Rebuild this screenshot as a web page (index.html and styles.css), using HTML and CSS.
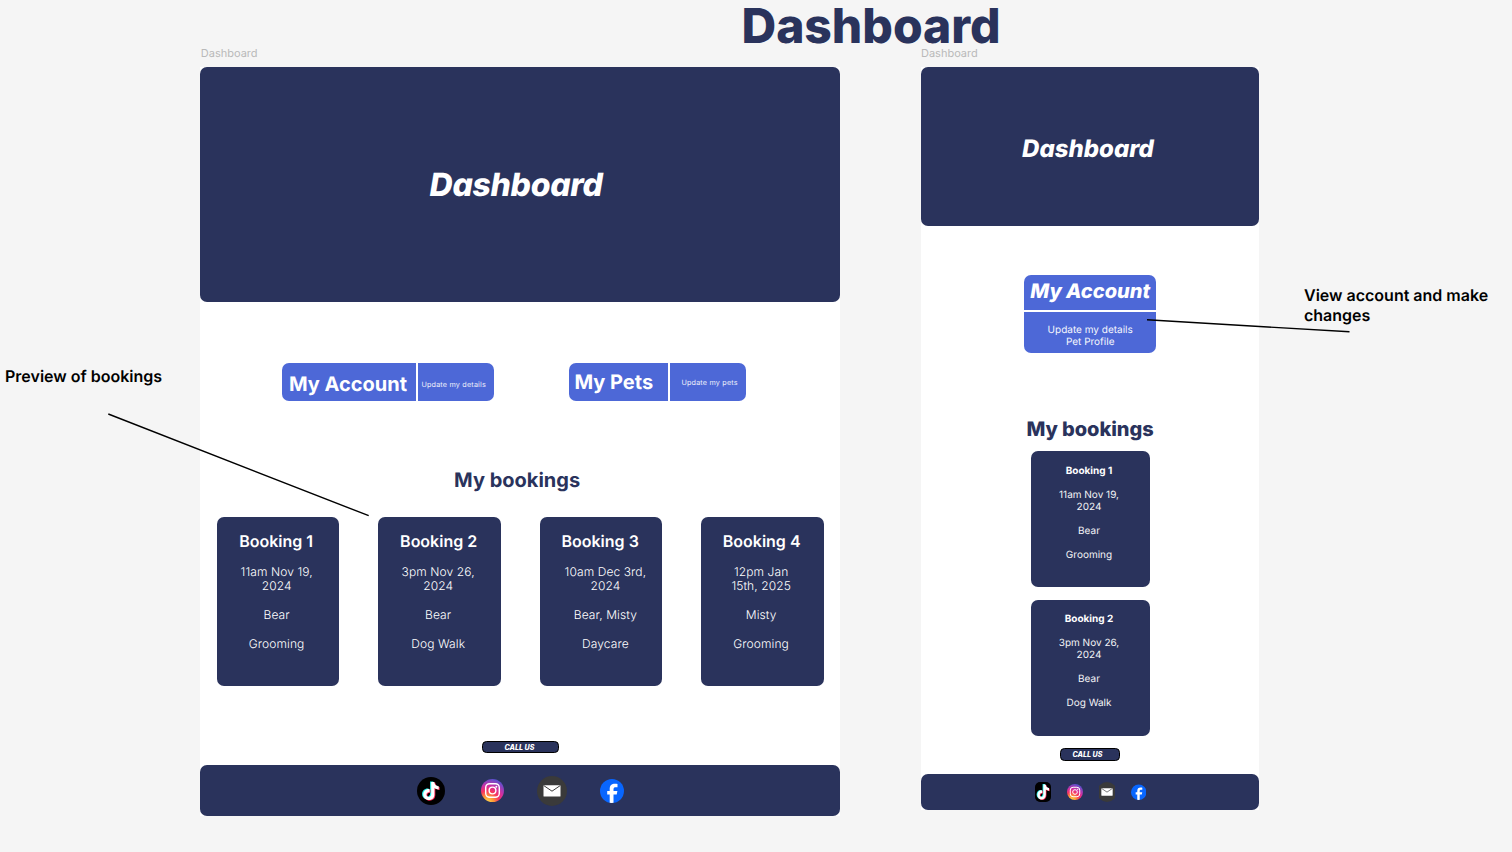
FILE: index.html
```html
<!DOCTYPE html>
<html lang="en">
<head>
<meta charset="utf-8">
<title>Dashboard</title>
<link rel="stylesheet" href="styles.css">
</head>
<body>
<svg class="defs" width="0" height="0" aria-hidden="true">
  <defs>
    <radialGradient id="ig" cx="0.28" cy="1.02" r="1.05">
      <stop offset="0" stop-color="#ffdc50"/>
      <stop offset="0.25" stop-color="#fd9b35"/>
      <stop offset="0.48" stop-color="#f8355f"/>
      <stop offset="0.68" stop-color="#d32fa0"/>
      <stop offset="1" stop-color="#5a51d0"/>
    </radialGradient>
    <path id="note" d="M14.200 5h3.100c.2 2.500 1.700 4.100 4.400 4.300v3.100c-1.600 0-3.100-.5-4.300-1.400v6.400c0 3.700-2.700 5.700-5.600 5.700-3.200 0-5.600-2.400-5.600-5.500 0-3.500 2.900-6 6.400-5.500v3.200c-1.700-.5-3.200.6-3.200 2.200 0 1.400 1.100 2.400 2.400 2.400 1.500 0 2.400-1.100 2.400-2.600z"/>
    <symbol id="tiktok" viewBox="0 0 28 28">
      <circle cx="14" cy="14" r="14" fill="#000"/>
      <use href="#note" x="-1.1" y="-0.500" fill="#25f4ee"/>
      <use href="#note" x="0.9" y="0.600" fill="#fe2c55"/>
      <use href="#note" x="0" fill="#fff"/>
    </symbol>
    <symbol id="instagram" viewBox="0 0 24 24">
      <circle cx="12" cy="12" r="12" fill="url(#ig)"/>
      <rect x="4.900" y="4.900" width="14.200" height="14.200" rx="4.2" fill="none" stroke="#fff" stroke-width="1.500"/>
      <circle cx="12" cy="12" r="3.500" fill="none" stroke="#fff" stroke-width="1.500"/>
      <circle cx="16" cy="8" r="1" fill="#fff"/>
    </symbol>
    <symbol id="mail" viewBox="0 0 30 30">
      <circle cx="15" cy="15" r="15" fill="#3a3a3a"/>
      <rect x="6.500" y="9.200" width="17" height="11.300" rx=".6" fill="#fff"/>
      <path d="M6.800 9.600 15 15.200l8.200-5.600" fill="none" stroke="#3a3a3a" stroke-width="1"/>
    </symbol>
    <symbol id="facebook" viewBox="0 0 24 24">
      <circle cx="12" cy="12" r="12" fill="#0866ff"/>
      <path d="M9.700 23.800V15.600H7.200V12h2.500v-1.700c0-3.900 1.800-5.600 5.400-5.600.8 0 1.800.1 2.400.3v3.200h-1.500c-1.900 0-2.500.6-2.500 2.300V12h3.900l-.7 3.600h-3.200v8.200a12 12 0 0 1-3.800 0z" fill="#fff"/>
    </symbol>
  </defs>
</svg>
<main class="board">
  <h1 class="board-title">Dashboard</h1>

  <section class="frame desktop">
    <div class="frame-label">Dashboard</div>
    <header class="hero"><span>Dashboard</span></header>
    <nav class="actions">
      <div class="action account"><b>My Account</b><span>Update my details</span></div>
      <div class="action pets"><b>My Pets</b><span>Update my pets</span></div>
    </nav>
    <h2 class="heading">My bookings</h2>
    <div class="cards">
      <article class="card"><h3>Booking 1</h3><p>11am Nov 19,<br>2024</p><p>Bear</p><p>Grooming</p></article>
      <article class="card"><h3>Booking 2</h3><p>3pm Nov 26,<br>2024</p><p>Bear</p><p>Dog Walk</p></article>
      <article class="card shifted"><h3>Booking 3</h3><p>10am Dec 3rd,<br>2024</p><p>Bear, Misty</p><p>Daycare</p></article>
      <article class="card"><h3>Booking 4</h3><p>12pm Jan<br>15th, 2025</p><p>Misty</p><p>Grooming</p></article>
    </div>
    <button class="call">CALL US</button>
    <footer class="social">
      <svg class="i-tiktok"><use href="#tiktok"/></svg>
      <svg class="i-instagram"><use href="#instagram"/></svg>
      <svg class="i-mail"><use href="#mail"/></svg>
      <svg class="i-facebook"><use href="#facebook"/></svg>
    </footer>
  </section>

  <section class="frame mobile">
    <div class="frame-label">Dashboard</div>
    <header class="hero"><span>Dashboard</span></header>
    <div class="account-card"><b>My Account</b><p>Update my details<br>Pet Profile</p></div>
    <h2 class="heading">My bookings</h2>
    <div class="cards">
      <article class="card"><h3>Booking 1</h3><p>11am Nov 19,<br>2024</p><p>Bear</p><p>Grooming</p></article>
      <article class="card"><h3>Booking 2</h3><p>3pm Nov 26,<br>2024</p><p>Bear</p><p>Dog Walk</p></article>
    </div>
    <button class="call">CALL US</button>
    <footer class="social">
      <svg class="i-tiktok" viewBox="3 2 22 24" preserveAspectRatio="none"><use href="#tiktok" width="28" height="28"/></svg>
      <svg class="i-instagram"><use href="#instagram"/></svg>
      <svg class="i-mail" viewBox="3 0 24 30" preserveAspectRatio="none"><use href="#mail" width="30" height="30"/></svg>
      <svg class="i-facebook"><use href="#facebook"/></svg>
    </footer>
  </section>

  <p class="note note-left">Preview of bookings</p>
  <p class="note note-right">View account and make<br>changes</p>
  <svg class="connectors" viewBox="0 0 1512 852">
    <path d="M108.300 414 368.700 515.700M1147 319.800 1349.500 331.800"/>
  </svg>
</main>
</body>
</html>
```

FILE: styles.css
```css
* { box-sizing: border-box; margin: 0; padding: 0; }

body {
  width: 1512px;
  height: 852px;
  overflow: hidden;
  background: #f5f5f5;
  font-family: Inter, "Liberation Sans", sans-serif;
  font-optical-sizing: none;
  text-rendering: geometricPrecision;
  white-space: nowrap;
}

.defs { position: absolute; }
.board { position: relative; width: 1512px; height: 852px; overflow: hidden; }

.board-title {
  position: absolute;
  left: 741.5px;
  top: 0;
  font-size: 48px;
  line-height: 52px;
  font-weight: 800;
  letter-spacing: -0.03px;
  color: #2a335c;
}

.frame {
  position: absolute;
  display: flex;
  flex-direction: column;
  background: #fff;
}
.desktop { left: 200.4px; top: 66.5px; width: 640px; height: 749.9px; }
.mobile { left: 921px; top: 66.5px; width: 338px; height: 743.9px; }

.frame-label {
  position: absolute;
  left: 0.400px;
  top: -20.500px;
  font-size: 11px;
  line-height: 14px;
  color: #b9b9b9;
}
.mobile .frame-label { left: 0; }

.hero {
  display: flex;
  align-items: center;
  justify-content: center;
  background: #2a335c;
  color: #fff;
  border-radius: 7px;
  font-style: italic;
  font-weight: 800;
}
.desktop .hero { height: 235.900px; font-size: 32px; padding: 0 8.500px 0 0; letter-spacing: -0.3px; }
.mobile .hero { height: 159.5px; font-size: 24px; padding: 4px 4px 0 0; }

.actions {
  display: flex;
  gap: 75px;
  padding-left: 82px;
  margin-top: 61px;
}
.action {
  display: flex;
  height: 37.5px;
  border-radius: 7px;
  background: #4d68d7;
  color: #fff;
  line-height: 39px;
}
.action b { font-size: 20px; font-weight: 700; border-right: 2px solid #fff; }
.action span { font-size: 7.2px; font-weight: 400; letter-spacing: 0.2px; opacity: .9; }
.account { width: 212px; }
.account b { width: 135.300px; padding: 2px 0 0 6.500px; }
.account span { padding: 2px 0 0 3.700px; }
.pets { width: 176.500px; }
.pets b { width: 100.300px; padding-left: 5px; }
.pets span { padding-left: 11.700px; }

.heading {
  font-size: 20px;
  line-height: 24px;
  font-weight: 700;
  text-align: center;
  color: #2a335c;
}
.desktop .heading { margin-top: 67.500px; padding-right: 6.500px; }
.mobile .heading { margin-top: 64px; font-weight: 800; letter-spacing: -0.06px; }

.card {
  background: #2a335c;
  color: #fff;
  border-radius: 7px;
  text-align: center;
}
.desktop .cards {
  display: grid;
  grid-template-columns: repeat(4, 122.5px);
  gap: 39px;
  padding-left: 16.500px;
  margin-top: 24.200px;
}
.desktop .card { height: 169px; padding: 15px 4px 0 0; }
.desktop .card h3 { font-size: 16px; line-height: 19px; font-weight: 600; margin-bottom: 14.200px; }
.desktop .card + .card h3 { padding-left: 2px; }
.desktop .card p { font-size: 12px; line-height: 14.5px; font-weight: 300; letter-spacing: 0.1px; margin-bottom: 14.4px; }
.desktop .card:not(.shifted) p { padding-left: 1px; }
.desktop .shifted p { padding-left: 12.500px; }

.mobile .cards {
  display: grid;
  gap: 12.500px;
  width: 119px;
  margin: 10.300px 0 0 110px;
}
.mobile .card { height: 136px; padding: 13.500px 3px 0 0; }
.mobile .card h3 { font-size: 10px; line-height: 12px; font-weight: 700; margin-bottom: 12px; }
.mobile .card p { font-size: 10px; line-height: 12px; margin-bottom: 12px; opacity: .95; }

.account-card {
  width: 132.400px;
  height: 77.5px;
  margin: 49.400px 0 0 103px;
  border-radius: 7px;
  background: #4d68d7;
  color: #fff;
  text-align: center;
}
.account-card b {
  display: block;
  height: 36.500px;
  padding-top: 3.800px;
  border-bottom: 2px solid #fff;
  font-size: 20px;
  line-height: 24px;
  font-weight: 800;
  font-style: italic;
}
.account-card p { font-size: 10px; line-height: 12px; padding-top: 12.300px; opacity: .95; }

.call {
  display: block;
  border: 1px solid #000;
  border-radius: 4.500px;
  background: #2a335c;
  color: #fff;
  font: italic 800 7.1px/10px Inter, sans-serif;
}
.desktop .call { width: 77.500px; height: 12.500px; margin: 55px 0 0 281.500px; padding: 1px 2.500px 0 0; }
.mobile .call { width: 60px; height: 13.500px; margin: 12px 0 0 139px; padding: 1px 5px 0 0; }

.social {
  display: flex;
  align-items: center;
  margin-top: auto;
  border-radius: 7px;
  background: #2a335c;
}
.desktop .social { height: 51px; padding-left: 216.300px; }
.mobile .social { height: 36px; padding-left: 113.500px; }
.social svg { flex: none; }

.desktop .i-tiktok { width: 28px; height: 28px; }
.desktop .i-instagram { width: 23px; height: 23px; margin-left: 36.200px; }
.desktop .i-mail { width: 30px; height: 30px; margin-left: 33.400px; }
.desktop .i-facebook { width: 24px; height: 24px; margin-left: 32.800px; }
.mobile .i-tiktok { width: 16.500px; height: 20px; border-radius: 5px; }
.mobile .i-instagram { width: 16px; height: 16px; margin-left: 16px; }
.mobile .i-mail { width: 16px; height: 20px; margin-left: 15.500px; }
.mobile .i-facebook { width: 15.500px; height: 16.500px; margin-left: 16px; }

.note {
  position: absolute;
  font-size: 16px;
  line-height: 19.500px;
  font-weight: 600;
  color: #000;
}
.note-left { left: 5px; top: 367px; }
.note-right { left: 1304px; top: 286px; }

.connectors {
  position: absolute;
  left: 0;
  top: 0;
  width: 1512px;
  height: 852px;
  fill: none;
  stroke: #000;
  stroke-width: 1.4;
}
```
